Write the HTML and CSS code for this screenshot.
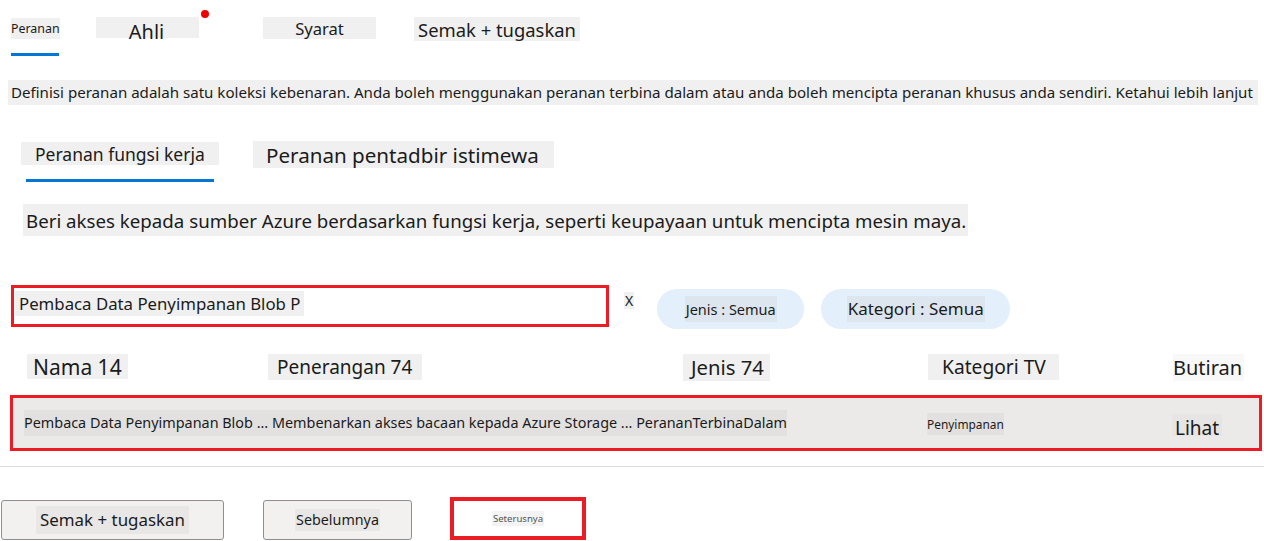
FILE: index.html
```html
<!DOCTYPE html>
<html lang="ms">
<head>
<meta charset="utf-8">
<title>Peranan</title>
<link rel="stylesheet" href="styles.css">
</head>
<body>
<div class="page">
  <nav class="tabs">
    <div class="tab tab-active"><span class="lbl lbl-peranan">Peranan</span></div>
    <div class="tab tab-ahli"><span class="lbl lbl-ahli">Ahli</span><span class="dot"></span></div>
    <div class="tab"><span class="lbl lbl-syarat">Syarat</span></div>
    <div class="tab"><span class="lbl lbl-semak">Semak + tugaskan</span></div>
  </nav>

  <p class="intro"><span class="lbl">Definisi peranan adalah satu koleksi kebenaran. Anda boleh menggunakan peranan terbina dalam atau anda boleh mencipta peranan khusus anda sendiri. Ketahui lebih lanjut</span></p>

  <div class="subtabs">
    <div class="subtab subtab-active"><span class="lbl lbl-fungsi">Peranan fungsi kerja</span></div>
    <div class="subtab"><span class="lbl lbl-pentadbir">Peranan pentadbir istimewa</span></div>
  </div>

  <p class="subdesc"><span class="lbl">Beri akses kepada sumber Azure berdasarkan fungsi kerja, seperti keupayaan untuk mencipta mesin maya.</span></p>

  <div class="filters">
    <div class="search"><span class="lbl">Pembaca Data Penyimpanan Blob P</span></div>
    <span class="clear lbl">X</span>
    <span class="pill pill-jenis"><span class="pill-lbl">Jenis : Semua</span></span>
    <span class="pill pill-kategori"><span class="pill-lbl">Kategori : Semua</span></span>
  </div>

  <div class="thead">
    <span class="th"><span class="lbl th-nama">Nama 14</span></span>
    <span class="th"><span class="lbl th-pen">Penerangan 74</span></span>
    <span class="th"><span class="lbl th-jenis">Jenis 74</span></span>
    <span class="th"><span class="lbl th-kat">Kategori TV</span></span>
    <span class="th"><span class="lbl th-but">Butiran</span></span>
  </div>

  <div class="trow">
    <span class="td td-main"><span class="cell-lbl">Pembaca Data Penyimpanan Blob ... Membenarkan akses bacaan kepada Azure Storage ... PerananTerbinaDalam</span></span>
    <span class="td td-kat"><span class="cell-lbl">Penyimpanan</span></span>
    <span class="td td-lihat"><span class="cell-lbl">Lihat</span></span>
  </div>

  <hr class="divider">

  <div class="actions">
    <button class="btn btn-semak"><span class="lbl">Semak + tugaskan</span></button>
    <button class="btn btn-prev"><span class="lbl">Sebelumnya</span></button>
    <button class="btn btn-next"><span class="lbl">Seterusnya</span></button>
  </div>
</div>
</body>
</html>
```

FILE: styles.css
```css
* { box-sizing: border-box; }
html, body { margin: 0; padding: 0; background: #fff; }
body {
  font-family: "Noto Sans", "Open Sans", sans-serif;
  color: #1b1b1b;
  width: 1264px;
  height: 541px;
  overflow: hidden;
}
.page { padding: 0; }

.lbl { background: #f0f0f0; line-height: 1.2; }

/* top tabs */
.tabs {
  display: flex;
  align-items: flex-start;
  padding: 17px 0 0 11px;
  height: 56px;
}
.tab { position: relative; display: flex; }
.tab-active {
  height: 39px;
  border-bottom: 3px solid #0078d4;
  width: 48px;
  align-items: flex-start;
  padding-top: 1px;
}
.lbl-peranan { font-size: 12.4px; line-height: 21px; padding: 0; white-space: nowrap; }
.tab-ahli { margin-left: 37px; }
.lbl-ahli {
  display: inline-block; width: 103px; height: 21px; text-align: center;
  font-size: 20px; line-height: 29px; overflow: visible; padding-right: 2px;
}
.dot {
  position: absolute; left: 105px; top: -7px;
  width: 8px; height: 8px; border-radius: 50%; background: #f00000;
}
.lbl-syarat {
  display: inline-block; margin-left: 64px; width: 113px; height: 22px;
  text-align: center; font-size: 16.6px; line-height: 23px;
}
.lbl-semak {
  display: inline-block; margin-left: 38px; width: 166px; height: 24px;
  text-align: center; font-size: 18.4px; line-height: 26px; white-space: nowrap;
}

/* intro */
.intro {
  margin: 24px 6px 0 8px;
  background: #f0f0f0;
  height: 25px;
  font-size: 15.1px;
  line-height: 25px;
  padding-left: 3px;
  white-space: nowrap;
}
.intro .lbl { background: none; }

/* subtabs */
.subtabs {
  display: flex;
  align-items: flex-start;
  margin-top: 37px;
  padding-left: 21px;
  height: 41px;
}
.subtab-active {
  position: relative;
  width: 199px;
  height: 41px;
}
.subtab-active::after {
  content: ""; position: absolute; left: 5px; width: 188px; top: 37px;
  height: 3px; background: #0078d4;
}
.lbl-fungsi {
  display: inline-block; height: 23px; width: 198px; padding: 0 0 0 14px;
  font-size: 17.5px; line-height: 24px; white-space: nowrap;
}
.subtab + .subtab { margin-left: 33px; margin-top: -1px; }
.lbl-pentadbir {
  display: inline-block; height: 27px; width: 301px; padding: 0 0 0 13px;
  font-size: 20.6px; line-height: 28px; white-space: nowrap;
}

/* sub description */
.subdesc {
  margin: 25px 0 0 23px;
  font-size: 18.7px;
  line-height: 26px;
  height: 26px;
  white-space: nowrap;
}
.subdesc .lbl { padding: 4px 2px 3px 3px; line-height: 26px; }

/* filters */
.filters {
  display: flex;
  align-items: flex-start;
  margin-top: 51px;
  padding-left: 11px;
  height: 44px;
}
.search {
  width: 598px;
  height: 42px;
  border: 3.5px solid #ec1c24;
  padding: 3px 0 0 1px;
}
.search .lbl {
  display: inline-block; height: 25px; padding: 0 4px 0 4px;
  font-size: 16.8px; line-height: 26px; white-space: nowrap;
}
.clear {
  margin: 7px 0 0 15px;
  font-size: 14px; line-height: 17px; padding: 0 1px;
}
.pill {
  display: flex; align-items: center; justify-content: center;
  height: 40px; margin-top: 4px;
  border-radius: 20px;
  background: #e3effa;
  white-space: nowrap;
}
.pill-jenis { width: 147px; margin-left: 23px; }
.pill-kategori { width: 189px; margin-left: 17px; }
.pill-lbl { background: #dde6ef; line-height: 26px; }
.pill-jenis .pill-lbl { font-size: 14.5px; padding: 0 1px; }
.pill-kategori .pill-lbl { font-size: 17px; padding: 0 1px; }

/* table header */
.thead {
  display: grid;
  grid-template-columns: 241px 415px 245px 245px auto;
  padding-left: 27px;
  margin-top: 25px;
  height: 41px;
  align-items: start;
  white-space: nowrap;
}
.th .lbl { display: inline-block; }
.th-nama { font-size: 21px; line-height: 24px; padding: 1px 6px 0 6px; }
.th-pen { font-size: 19px; line-height: 26px; padding: 0 10px 0 9px; }
.th-jenis { font-size: 20.3px; line-height: 27px; padding: 0 6px 0 8px; }
.th-kat { font-size: 19.2px; line-height: 26px; padding: 0 13px 0 14px; }
.th-but { font-size: 20px; line-height: 27px; padding: 0 2px 0 0; background: #f8f8f8; }

/* table row */
.trow {
  display: grid;
  grid-template-columns: 903px 245px auto;
  align-items: center;
  margin-left: 10px;
  margin-right: 2px;
  height: 56px;
  border: 3.5px solid #ec1c24;
  background: #ebeae9;
  padding-left: 11px;
  white-space: nowrap;
}
.cell-lbl { background: #e2e1e0; }
.td-main .cell-lbl { font-size: 14.4px; line-height: 26px; display: inline-block; padding: 0; }
.td-kat .cell-lbl { font-size: 11.9px; line-height: 22px; display: inline-block; margin-top: 2px; }
.td-lihat .cell-lbl {
  font-size: 19px; line-height: 22px; display: inline-block; margin-top: 8px;
  padding: 3px 3px 0 3px; background: #e6e5e4; height: 22px;
}

.divider {
  margin: 15px 0 0 0;
  border: 0;
  border-top: 1px solid #dcdcdc;
  height: 0;
}

/* actions */
.actions {
  display: flex;
  align-items: flex-start;
  margin-top: 33px;
  padding-left: 1px;
}
.btn {
  font-family: inherit;
  color: #1b1b1b;
  background: #f2f1f0;
  border: 1px solid #8f8f8f;
  border-radius: 3px;
  height: 40px;
  padding: 0;
  display: flex; align-items: center; justify-content: center;
  white-space: nowrap;
}
.btn-semak { width: 223px; }
.btn-semak .lbl { font-size: 16.9px; line-height: 28px; padding: 0 4px; background: #e8e7e6; }
.btn-prev { width: 149px; margin-left: 39px; }
.btn-prev .lbl { font-size: 14.3px; line-height: 22px; padding: 0 1px; background: #e8e7e6; }
.btn-next {
  width: 136px; height: 43px; margin-left: 38px; margin-top: -3px;
  background: #fff; border: 4.5px solid #ec1c24; border-radius: 0;
}
.btn-next .lbl { font-size: 9.6px; line-height: 15px; color: #555; background: #f3f3f3; padding: 0 1px; }
```
